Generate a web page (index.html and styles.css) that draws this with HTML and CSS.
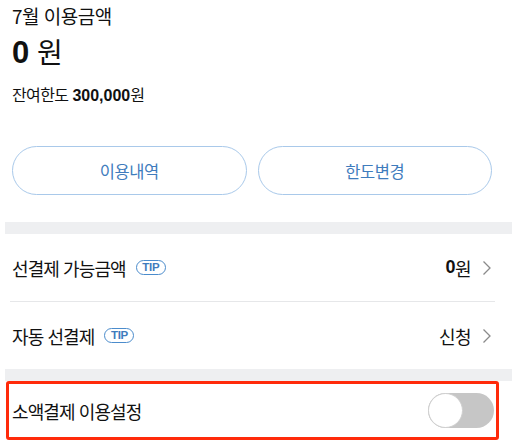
FILE: index.html
```html
<!DOCTYPE html>
<html lang="ko">
<head>
<meta charset="utf-8">
<link rel="stylesheet" href="styles.css">
</head>
<body>
<div class="summary">
  <div class="month">7월 이용금액</div>
  <div class="amount"><b>0</b> 원</div>
  <div class="limit">잔여한도 <b>300,000</b>원</div>
</div>
<div class="buttons">
  <button class="pill">이용내역</button>
  <button class="pill">한도변경</button>
</div>
<div class="band"></div>
<div class="list">
  <div class="row">
    <div class="label">선결제 가능금액 <span class="tip">TIP</span></div>
    <div class="value"><b>0</b>원 <svg class="chev" width="10" height="16" viewBox="0 0 10 16"><path d="M1.5 1.5 L8 8 L1.5 14.5" fill="none" stroke="#8a8a8a" stroke-width="1.3"/></svg></div>
  </div>
  <div class="divider"></div>
  <div class="row">
    <div class="label">자동 선결제 <span class="tip">TIP</span></div>
    <div class="value">신청 <svg class="chev" width="10" height="16" viewBox="0 0 10 16"><path d="M1.5 1.5 L8 8 L1.5 14.5" fill="none" stroke="#8a8a8a" stroke-width="1.3"/></svg></div>
  </div>
</div>
<div class="band band2"></div>
<div class="highlight">
  <div class="label">소액결제 이용설정</div>
  <div class="toggle"><div class="knob"></div></div>
</div>
<div class="bottomline"></div>
</body>
</html>
```
FILE: styles.css
```css
* { box-sizing: border-box; }
body {
  margin: 0;
  background: #fff;
  color: #111;
  font-family: "Noto Sans CJK KR", "Noto Sans", sans-serif;
  width: 512px;
  overflow: hidden;
}
.summary {
  padding: 3px 0 0 12px;
}
.month {
  font-size: 19px;
  line-height: 26px;
  letter-spacing: -0.5px;
}
.amount {
  font-size: 28px;
  line-height: 40px;
  margin-top: 2px;
}
.amount b {
  font-family: "Liberation Sans", sans-serif;
  font-size: 31px;
  font-weight: 700;
}
.limit {
  font-size: 16px;
  line-height: 20px;
  margin-top: 11px;
  letter-spacing: -0.6px;
}
.limit b {
  font-family: "Liberation Sans", sans-serif;
  font-weight: 700;
  letter-spacing: 0;
}
.buttons {
  display: grid;
  grid-template-columns: 1fr 1fr;
  gap: 11px;
  padding: 0 20px 0 12px;
  margin-top: 40px;
}
.pill {
  height: 49px;
  border: 1.5px solid #a9c9ea;
  border-radius: 25px;
  background: #fff;
  color: #3f7cbd;
  font-family: "Noto Sans CJK KR", sans-serif;
  font-size: 16.5px;
  letter-spacing: -0.4px;
}
.band {
  height: 12px;
  margin: 27px 0 0 5px;
  background: #eeeff1;
}
.band2 {
  margin-top: 0;
}
.row {
  height: 67px;
  display: flex;
  align-items: center;
  justify-content: space-between;
  padding: 0 20px 0 12px;
}
.label {
  font-size: 18px;
  letter-spacing: -0.9px;
  display: flex;
  align-items: center;
}
.tip {
  display: inline-block;
  margin-left: 10px;
  height: 15px;
  width: 30px;
  border: 1.4px solid #4b8ccc;
  border-radius: 8px;
  color: #3f7cbd;
  font-family: "Liberation Sans", sans-serif;
  font-weight: 700;
  font-size: 11.5px;
  line-height: 12.5px;
  text-align: center;
  letter-spacing: -0.3px;
}
.value {
  font-size: 18px;
  letter-spacing: -0.6px;
  display: flex;
  align-items: center;
}
.value b {
  font-family: "Liberation Sans", sans-serif;
  font-weight: 700;
}
.chev {
  margin-left: 11px;
}
.divider {
  height: 1px;
  background: #e6e7e9;
  margin: 0 17px 0 10px;
}
.highlight {
  height: 59px;
  margin: 0 13px 0 6px;
  border: 3px solid #ff2a0a;
  border-radius: 3px;
  display: flex;
  align-items: center;
  justify-content: space-between;
  padding: 0 2px 0 3px;
}
.toggle {
  width: 66px;
  height: 35px;
  border-radius: 18px;
  background: #c6c6c6;
  position: relative;
}
.knob {
  position: absolute;
  left: 0;
  top: 0;
  width: 35px;
  height: 35px;
  border-radius: 50%;
  background: #fff;
  border: 1px solid #cfcfcf;
}
.bottomline {
  height: 1px;
  background: #e6e7e9;
  margin: 7px 0 0 5px;
}
```
